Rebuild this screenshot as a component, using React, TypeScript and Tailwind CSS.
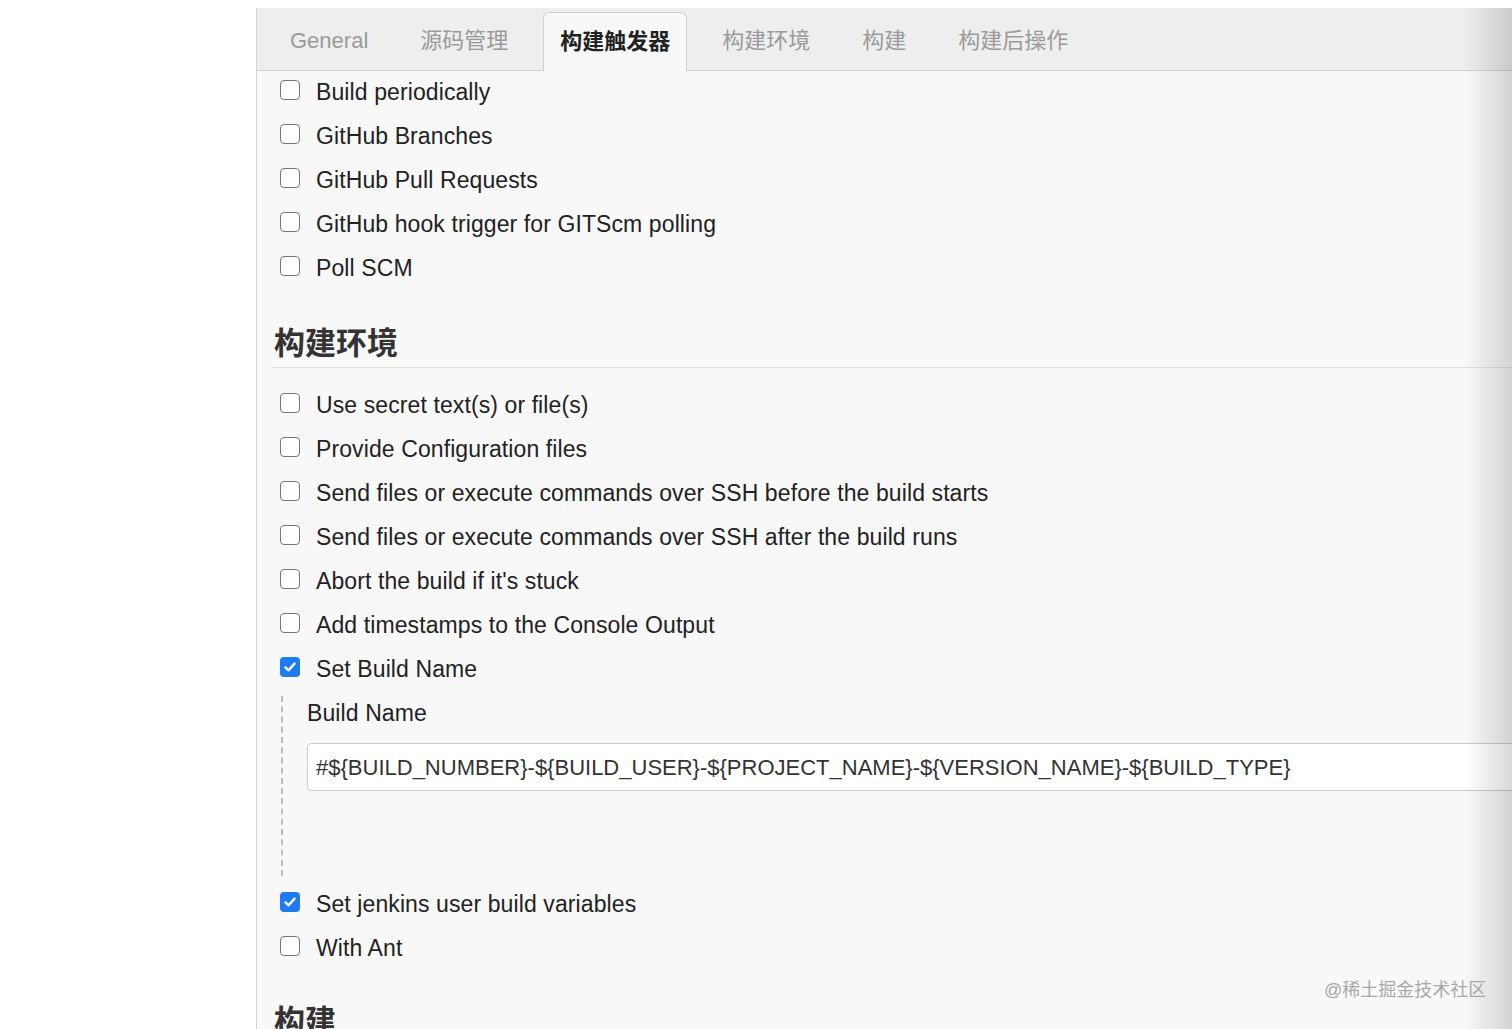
import React from "react";

const tabs = ["General", "源码管理", "构建触发器", "构建环境", "构建", "构建后操作"];
const activeTab = "构建触发器";

const triggers = [
	"Build periodically",
	"GitHub Branches",
	"GitHub Pull Requests",
	"GitHub hook trigger for GITScm polling",
	"Poll SCM",
];

const envOptions = [
	{ label: "Use secret text(s) or file(s)", checked: false },
	{ label: "Provide Configuration files", checked: false },
	{ label: "Send files or execute commands over SSH before the build starts", checked: false },
	{ label: "Send files or execute commands over SSH after the build runs", checked: false },
	{ label: "Abort the build if it's stuck", checked: false },
	{ label: "Add timestamps to the Console Output", checked: false },
	{ label: "Set Build Name", checked: true },
];

const font = { fontFamily: '"Liberation Sans", "Noto Sans CJK SC", Arial, sans-serif' };

const Checkbox = ({ checked }: { checked: boolean }) =>
	checked ? (
		<span className="w-[20px] h-[20px] rounded-[4px] bg-[#1f7bf2] flex items-center justify-center shrink-0">
			<svg width="14" height="14" viewBox="0 0 14 14" fill="none">
				<path d="M2.5 7.4 L5.6 10.3 L11.5 3.6" stroke="white" strokeWidth="2.4" strokeLinecap="round" strokeLinejoin="round" />
			</svg>
		</span>
	) : (
		<span className="w-[20px] h-[20px] rounded-[4px] border-[1.5px] border-[#767676] bg-white shrink-0" />
	);

const Row = ({ label, checked = false }: { label: string; checked?: boolean }) => (
	<div className="h-[44px] flex items-center pl-[8px] gap-[16px]">
		<Checkbox checked={checked} />
		<span className="text-[23px] leading-[26px] text-[#222] tracking-[0.1px] mt-[3px]">{label}</span>
	</div>
);

const Heading = ({ children }: { children: React.ReactNode }) => (
	<h2 className="text-[31px] leading-[40px] font-bold text-[#333] pl-[2px] pb-[3px] border-b border-[#e0e0e0]">
		{children}
	</h2>
);

const App = () => {
	return (
		<div className="relative w-[1512px] h-[1029px] overflow-hidden bg-white" style={font}>
			<div className="flex h-full pt-[8px]">
				<div className="w-[256px] shrink-0 bg-white" />
				<div className="flex-1 flex flex-col bg-[#f8f8f8] border-l border-[#d4d4d4] overflow-hidden">
					{/* tab bar */}
					<div className="h-[63px] shrink-0 bg-[#eeeeee] border-b border-[#cfcfcf] flex items-end pl-[16px] gap-[18px]">
						{tabs.map((t) =>
							t === activeTab ? (
								<div
									key={t}
									className="h-[59px] -mb-px px-[16px] flex items-center bg-[#f8f8f8] border border-b-0 border-[#d0d0d0] rounded-t-[6px] text-[22px] font-bold text-[#222]"
								>
									<span className="mb-[2px]">{t}</span>
								</div>
							) : (
								<div key={t} className="h-[59px] px-[17px] flex items-center text-[22px] text-[#9a9a9a]">
									<span>{t}</span>
								</div>
							)
						)}
					</div>

					<div className="pl-[15px] flex flex-col">
						<div className="-mt-[3px]">
							{triggers.map((t) => (
								<Row key={t} label={t} />
							))}
						</div>

						<div className="mt-[36px]">
							<Heading>构建环境</Heading>
						</div>

						<div className="mt-[13px]">
							{envOptions.map((o) => (
								<Row key={o.label} label={o.label} checked={o.checked} />
							))}
						</div>

						<div className="ml-[9px] mt-[7px] h-[180px] border-l-2 border-dashed border-[#bdbdbd] pl-[24px] pt-[4px]">
							<div className="text-[23px] leading-[26px] text-[#222] tracking-[0.1px]">Build Name</div>
							<div className="mt-[17px] w-[1300px] h-[48px] bg-white border border-[#cccccc] rounded-l-[4px] flex items-center pl-[8px] text-[22px] text-[#333]">
								#{"${BUILD_NUMBER}-${BUILD_USER}-${PROJECT_NAME}-${VERSION_NAME}-${BUILD_TYPE}"}
							</div>
						</div>

						<div className="mt-[4px]">
							<Row label="Set jenkins user build variables" checked />
							<Row label="With Ant" />
						</div>

						<div className="mt-[34px]">
							<Heading>构建</Heading>
						</div>
					</div>
				</div>
			</div>

			{/* right edge shadow */}
			<div className="absolute right-0 top-[8px] bottom-0 w-[48px] bg-gradient-to-r from-transparent to-[#00000026] pointer-events-none" />

			{/* watermark */}
			<div className="absolute left-[1324px] top-[978px] text-[18px] leading-[24px] text-[#a8a8a8] pointer-events-none">
				@稀土掘金技术社区
			</div>
		</div>
	);
};

export default App;
